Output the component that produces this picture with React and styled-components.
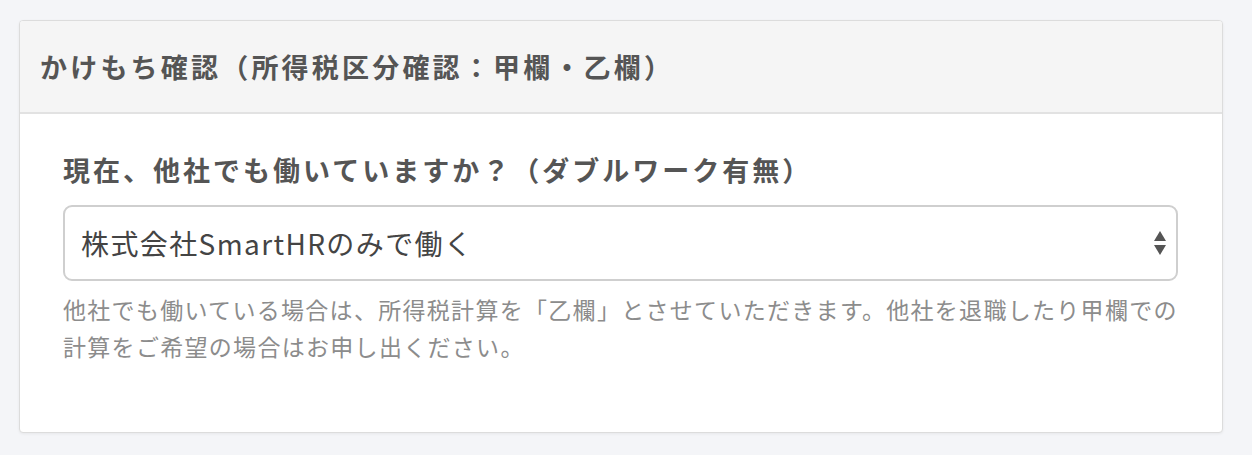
import React from "react";
import styled, { createGlobalStyle } from "styled-components";

const Global = createGlobalStyle`
  html, body { margin: 0; padding: 0; background: #f4f5f8; }
  body {
    font-family: "Noto Sans CJK JP", "Noto Sans", sans-serif;
    color: #555;
  }
`;

const Page = styled.div`
  padding: 20px 29px 0 19px;
  height: 455px;
  box-sizing: border-box;
`;

const Card = styled.section`
  background: #fff;
  border: 1px solid #dcdcdc;
  border-radius: 4px;
  box-shadow: 0 1px 3px rgba(0, 0, 0, 0.06);
  overflow: hidden;
`;

const Header = styled.header`
  background: #f5f5f5;
  border-bottom: 2px solid #e2e2e2;
  height: 91px;
  display: flex;
  align-items: center;
  padding: 0 20px;
`;

const Title = styled.h2`
  margin: 0;
  font-size: 27px;
  font-weight: 700;
  letter-spacing: 3.2px;
  color: #555;
`;

const Body = styled.div`
  padding: 36px 44px 67px 43px;
`;

const Label = styled.label`
  display: block;
  font-size: 27px;
  font-weight: 700;
  letter-spacing: 3px;
  color: #555;
  line-height: 40px;
  margin-bottom: 15px;
`;

const SelectWrap = styled.div`
  position: relative;
`;

const Select = styled.select`
  appearance: none;
  width: 100%;
  height: 76px;
  box-sizing: border-box;
  border: 2px solid #cfcfcf;
  border-radius: 9px;
  background: #fff;
  padding: 0 50px 0 16px;
  font-family: "Noto Sans CJK JP", "Noto Sans", sans-serif;
  font-size: 28px;
  letter-spacing: 1.4px;
  color: #444;
  outline: none;
`;

const Arrows = styled.svg`
  position: absolute;
  right: 11px;
  top: 50%;
  transform: translateY(-50%);
  pointer-events: none;
`;

const Help = styled.p`
  margin: 10px 0 0;
  font-size: 23px;
  line-height: 37px;
  letter-spacing: 1.3px;
  color: #8c8c8c;
`;

export default function App() {
  return (
    <>
      <Global />
      <Page>
        <Card>
          <Header>
            <Title>かけもち確認（所得税区分確認：甲欄・乙欄）</Title>
          </Header>
          <Body>
            <Label htmlFor="dw">現在、他社でも働いていますか？（ダブルワーク有無）</Label>
            <SelectWrap>
              <Select id="dw" defaultValue="a">
                <option value="a">株式会社SmartHRのみで働く</option>
                <option value="b">他社でも働いている</option>
              </Select>
              <Arrows width="14" height="26" viewBox="0 0 14 26">
                <path d="M7 1 L13 11 L1 11 Z" fill="#555" />
                <path d="M1 15 L13 15 L7 25 Z" fill="#555" />
              </Arrows>
            </SelectWrap>
            <Help>
              他社でも働いている場合は、所得税計算を「乙欄」とさせていただきます。他社を退職したり甲欄での計算をご希望の場合はお申し出ください。
            </Help>
          </Body>
        </Card>
      </Page>
    </>
  );
}
